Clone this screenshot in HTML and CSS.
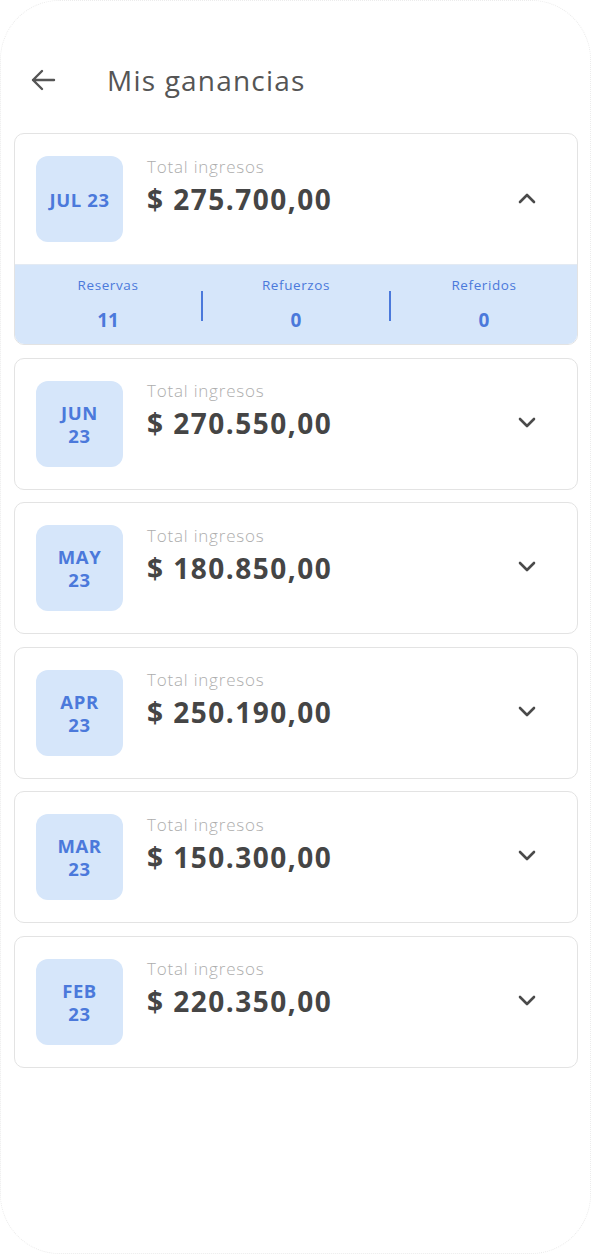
FILE: index.html
```html
<!DOCTYPE html>
<html lang="es">
<head>
<meta charset="utf-8">
<link rel="stylesheet" href="styles.css">
</head>
<body>
<div class="phone">
  <header class="topbar">
    <svg class="back" width="26" height="22" viewBox="0 0 26 22"><path d="M24 11H3M12 2L3 11l9 9" fill="none" stroke="#555" stroke-width="2.4" stroke-linecap="round" stroke-linejoin="round"/></svg>
    <h1 class="title">Mis ganancias</h1>
  </header>
  <main class="list">
    <section class="card open">
      <div class="card-main">
        <div class="badge"><span>JUL 23</span></div>
        <div class="info">
          <div class="label">Total ingresos</div>
          <div class="amount">$ 275.700,00</div>
        </div>
        <svg class="chev" width="20" height="12" viewBox="0 0 20 12"><path d="M3 10l7-7 7 7" fill="none" stroke="#4a4a4a" stroke-width="2.6" stroke-linecap="round" stroke-linejoin="round"/></svg>
      </div>
      <div class="stats">
        <div class="stat"><div class="stat-l">Reservas</div><div class="stat-v">11</div></div>
        <div class="sep"></div>
        <div class="stat"><div class="stat-l">Refuerzos</div><div class="stat-v">0</div></div>
        <div class="sep"></div>
        <div class="stat"><div class="stat-l">Referidos</div><div class="stat-v">0</div></div>
      </div>
    </section>
    <section class="card">
      <div class="card-main">
        <div class="badge"><span>JUN<br>23</span></div>
        <div class="info"><div class="label">Total ingresos</div><div class="amount">$ 270.550,00</div></div>
        <svg class="chev" width="20" height="12" viewBox="0 0 20 12"><path d="M3 2l7 7 7-7" fill="none" stroke="#4a4a4a" stroke-width="2.6" stroke-linecap="round" stroke-linejoin="round"/></svg>
      </div>
    </section>
    <section class="card">
      <div class="card-main">
        <div class="badge"><span>MAY<br>23</span></div>
        <div class="info"><div class="label">Total ingresos</div><div class="amount">$ 180.850,00</div></div>
        <svg class="chev" width="20" height="12" viewBox="0 0 20 12"><path d="M3 2l7 7 7-7" fill="none" stroke="#4a4a4a" stroke-width="2.6" stroke-linecap="round" stroke-linejoin="round"/></svg>
      </div>
    </section>
    <section class="card">
      <div class="card-main">
        <div class="badge"><span>APR<br>23</span></div>
        <div class="info"><div class="label">Total ingresos</div><div class="amount">$ 250.190,00</div></div>
        <svg class="chev" width="20" height="12" viewBox="0 0 20 12"><path d="M3 2l7 7 7-7" fill="none" stroke="#4a4a4a" stroke-width="2.6" stroke-linecap="round" stroke-linejoin="round"/></svg>
      </div>
    </section>
    <section class="card">
      <div class="card-main">
        <div class="badge"><span>MAR<br>23</span></div>
        <div class="info"><div class="label">Total ingresos</div><div class="amount">$ 150.300,00</div></div>
        <svg class="chev" width="20" height="12" viewBox="0 0 20 12"><path d="M3 2l7 7 7-7" fill="none" stroke="#4a4a4a" stroke-width="2.6" stroke-linecap="round" stroke-linejoin="round"/></svg>
      </div>
    </section>
    <section class="card">
      <div class="card-main">
        <div class="badge"><span>FEB<br>23</span></div>
        <div class="info"><div class="label">Total ingresos</div><div class="amount">$ 220.350,00</div></div>
        <svg class="chev" width="20" height="12" viewBox="0 0 20 12"><path d="M3 2l7 7 7-7" fill="none" stroke="#4a4a4a" stroke-width="2.6" stroke-linecap="round" stroke-linejoin="round"/></svg>
      </div>
    </section>
  </main>
</div>
</body>
</html>
```
FILE: styles.css
```css
* { box-sizing: border-box; margin: 0; padding: 0; }
html, body { background: #fff; }
body {
  font-family: "Open Sans", "Noto Sans", sans-serif;
  width: 591px;
  height: 1254px;
  overflow: hidden;
}
.phone {
  width: 591px;
  height: 1254px;
  border: 1px dotted #ececec;
  border-radius: 60px;
  padding: 0 12px 0 13px;
  background: #fff;
}
.topbar {
  display: flex;
  align-items: center;
  height: 130px;
  padding-top: 28px;
  padding-left: 16px;
}
.back { margin-right: 51px; }
.title {
  font-size: 28px;
  font-weight: 400;
  color: #555;
  letter-spacing: 1.2px;
}
.list {
  display: flex;
  flex-direction: column;
  gap: 12.5px;
  padding-top: 2px;
}
.card {
  border: 1px solid #e3e3e3;
  border-radius: 10px;
  overflow: hidden;
  background: #fff;
}
.card-main {
  display: flex;
  align-items: center;
  padding: 22px 22px 22px 21px;
  height: 130px;
}
.badge {
  width: 87px;
  height: 86px;
  border-radius: 12px;
  background: #d6e6fa;
  display: flex;
  align-items: center;
  justify-content: center;
  text-align: center;
  color: #4b79db;
  font-weight: 700;
  font-size: 18.5px;
  letter-spacing: 0.6px;
  line-height: 23px;
  flex: none;
}
.info {
  flex: 1;
  margin-left: 24px;
  margin-top: -24px;
}
.label {
  font-size: 17px;
  font-weight: 300;
  color: #adadad;
  letter-spacing: 0.8px;
  line-height: 22px;
}
.amount {
  font-size: 28px;
  font-weight: 700;
  color: #454545;
  letter-spacing: 1.5px;
  line-height: 40px;
  margin-top: 1px;
}
.chev { margin-right: 18px; margin-top: -2px; }
.stats {
  background: #d6e6fa;
  height: 80px;
  display: flex;
  align-items: center;
  border-top: 1px solid #e3eaf3;
}
.stat {
  flex: 1;
  text-align: center;
  color: #4b79db;
}
.stat-l { font-size: 13.5px; letter-spacing: 0.6px; line-height: 18px; margin-top: -2px; }
.stat-v { font-size: 19px; font-weight: 700; line-height: 24px; margin-top: 14px; }
.sep { width: 2px; height: 30px; background: #4b79db; margin-top: 2px; }
```
